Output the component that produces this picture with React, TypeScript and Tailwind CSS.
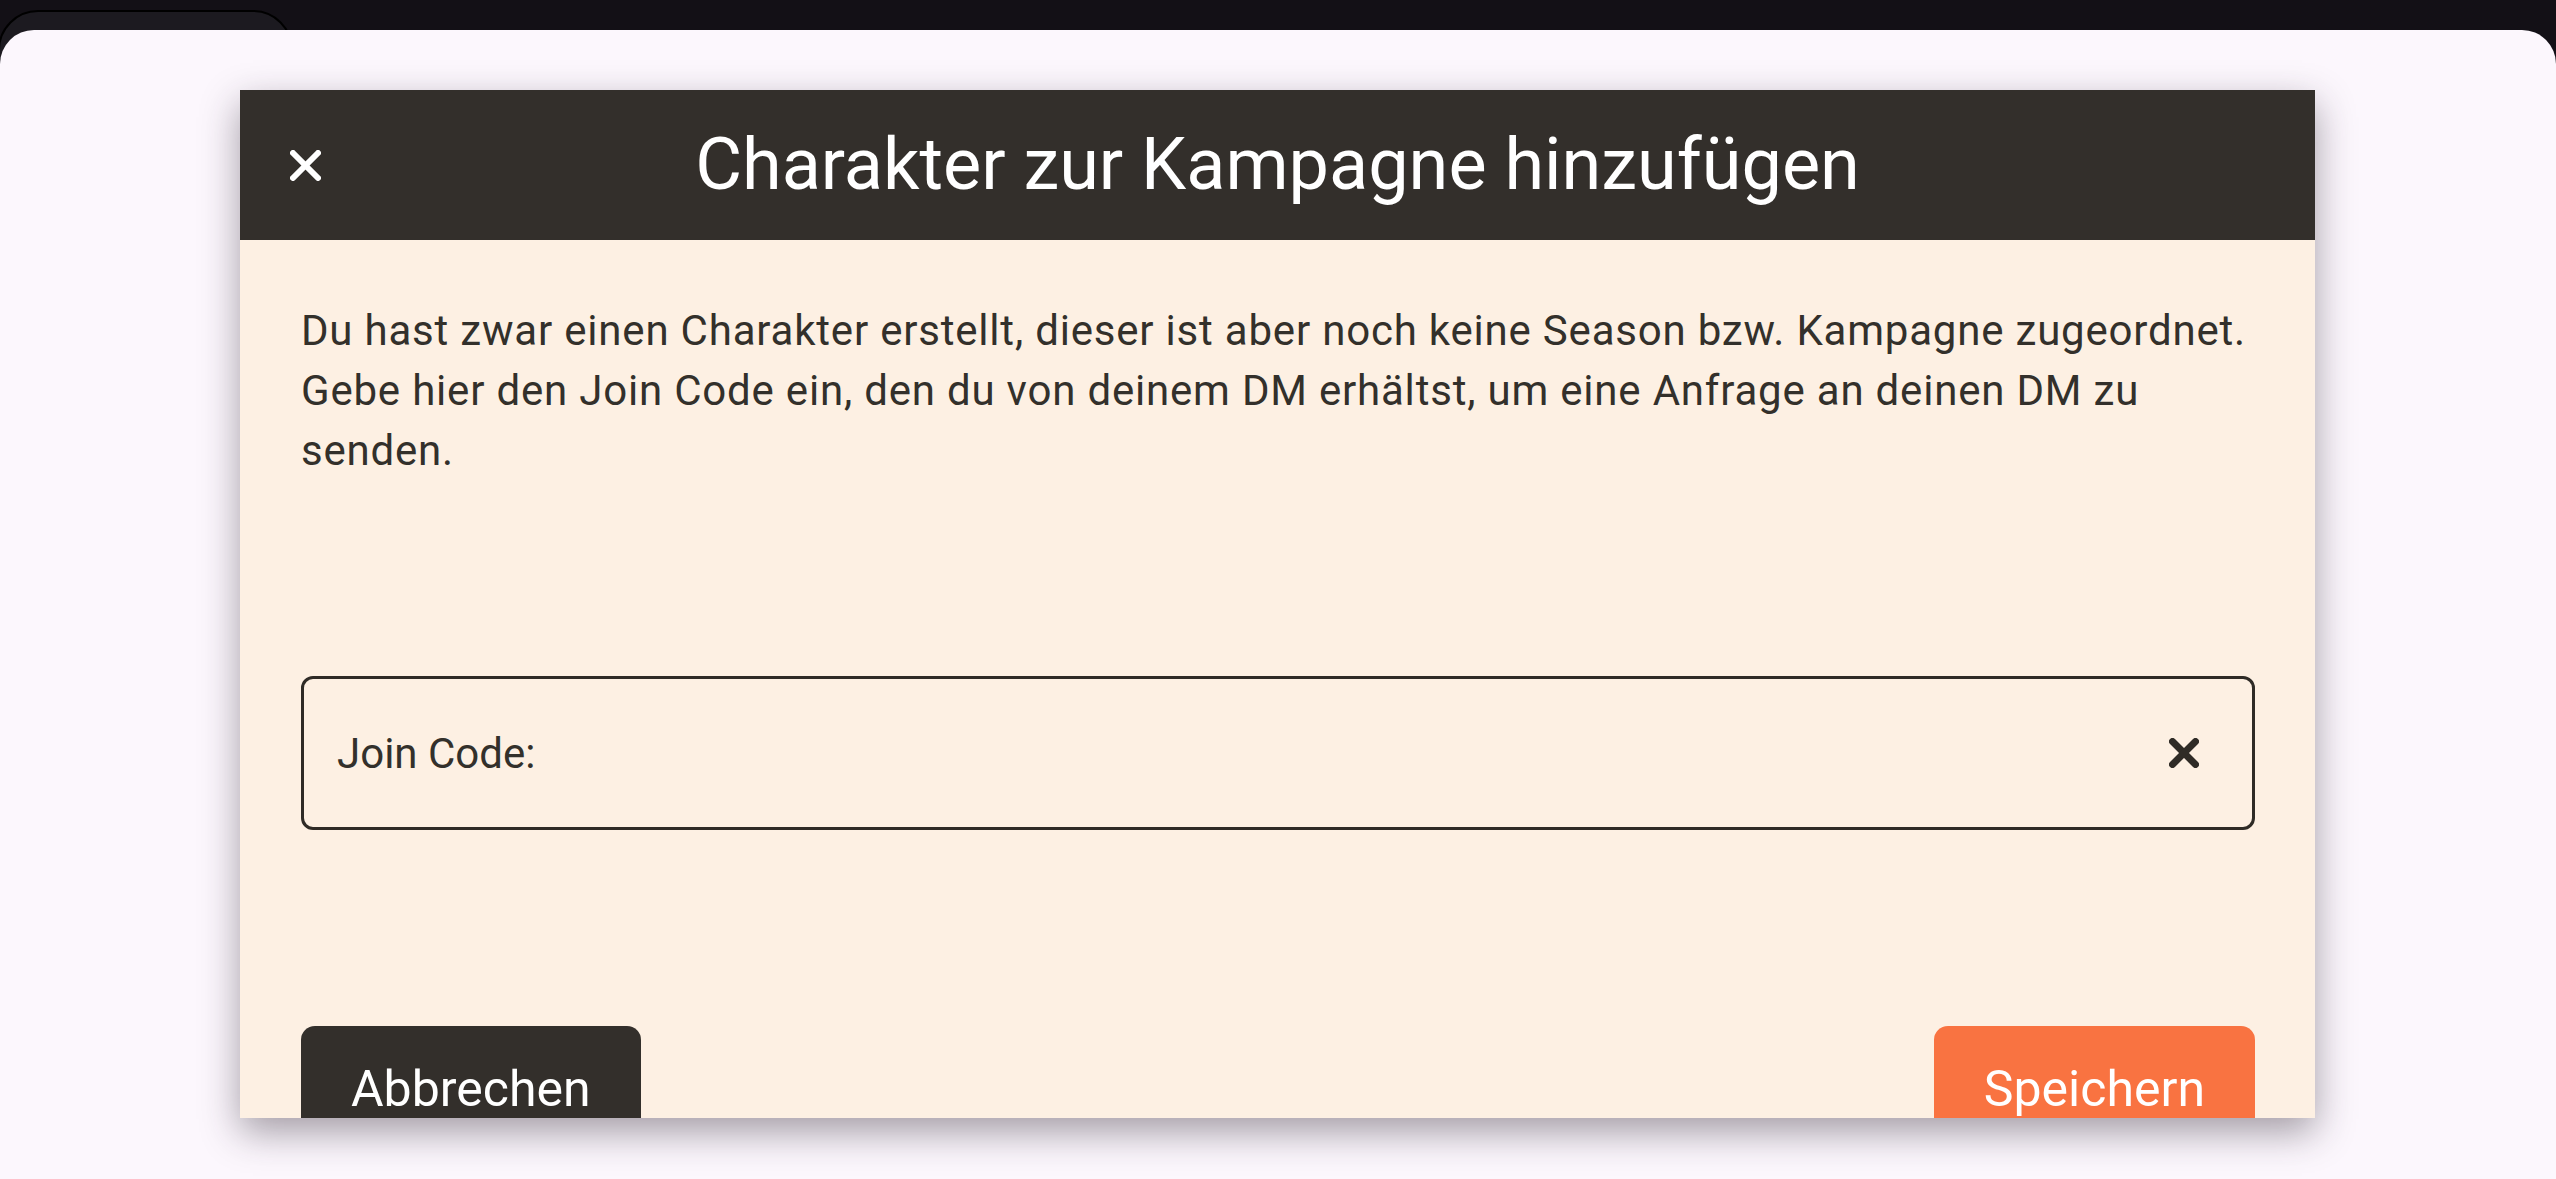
function XGlyph({ size, stroke, color }: { size: number; stroke: number; color: string }) {
  const p = stroke / 2
  return (
    <svg width={size} height={size} viewBox={`0 0 ${size} ${size}`} className="shrink-0">
      <line x1={p} y1={p} x2={size - p} y2={size - p} stroke={color} strokeWidth={stroke} strokeLinecap="round" />
      <line x1={size - p} y1={p} x2={p} y2={size - p} stroke={color} strokeWidth={stroke} strokeLinecap="round" />
    </svg>
  )
}

const introLines = [
  'Du hast zwar einen Charakter erstellt, dieser ist aber noch keine Season bzw. Kampagne zugeordnet.',
  'Gebe hier den Join Code ein, den du von deinem DM erhältst, um eine Anfrage an deinen DM zu',
  'senden.',
]

export default function App() {
  return (
    <div
      className="relative w-[2556px] h-[1179px] overflow-hidden bg-[#131016] flex flex-col"
      style={{ fontFamily: 'Roboto, "Noto Sans", sans-serif' }}
    >
      {/* browser tab peeking out at the top */}
      <div className="absolute left-[-2px] top-[10px] w-[295px] h-[60px] rounded-t-[40px] border-2 border-black bg-[#1c1a20]" />

      <div className="relative mt-[30px] flex-1 bg-[#fcf7fd] rounded-t-[34px] pt-[60px] pl-[240px]">
        <div className="w-[2075px] h-[1028px] overflow-hidden bg-[#fdf0e3] shadow-[0_14px_36px_rgba(40,30,45,0.42)]">
          {/* header */}
          <div className="relative h-[150px] bg-[#332f2b] flex items-center justify-center">
            <button className="absolute left-[50px] top-[60px]">
              <XGlyph size={31} stroke={6} color="#ffffff" />
            </button>
            <h1 className="text-[72px] leading-none text-white">Charakter zur Kampagne hinzufügen</h1>
          </div>

          {/* body */}
          <div className="pl-[61px] pr-[60px] pt-[61px]">
            <p className="text-[42px] leading-[60px] tracking-[0.8px] text-[#33302b]">
              {introLines.map((line) => (
                <span key={line} className="block whitespace-nowrap">
                  {line}
                </span>
              ))}
            </p>

            <div className="mt-[195px] h-[154px] border-[3px] border-[#2f2b26] rounded-[12px] flex items-center justify-between pl-[33px] pr-[53px]">
              <span className="text-[42px] text-[#33302b]">Join Code:</span>
              <XGlyph size={30} stroke={7} color="#2f2b26" />
            </div>

            <div className="mt-[196px] flex justify-between">
              <button className="h-[126px] px-[50px] rounded-[14px] bg-[#332f2b] text-white text-[50px]">
                Abbrechen
              </button>
              <button className="h-[126px] px-[50px] rounded-[14px] bg-[#f97341] text-white text-[50px]">
                Speichern
              </button>
            </div>
          </div>
        </div>
      </div>
    </div>
  )
}
